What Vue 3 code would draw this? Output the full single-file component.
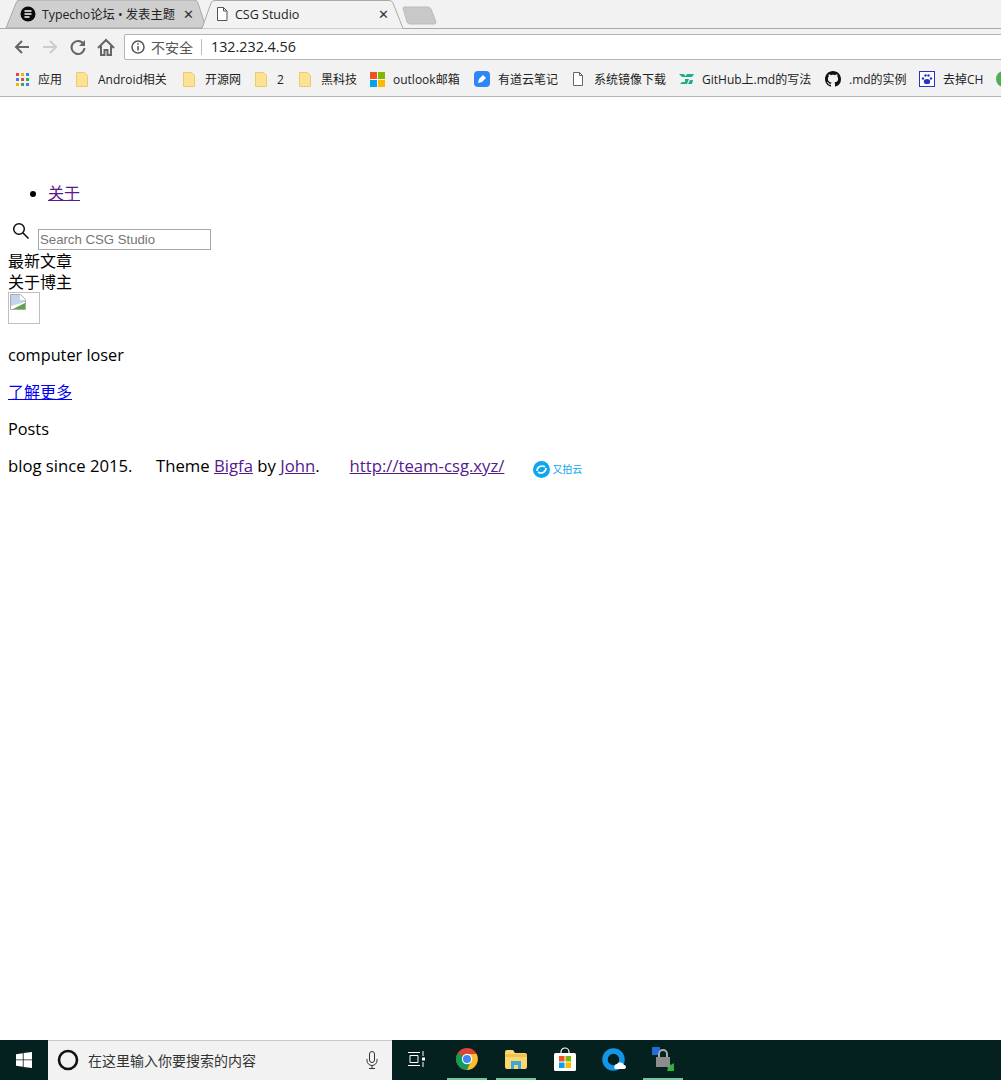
<script setup>
const bookmarks = [
  { icon: 'apps', label: '应用', w: 24 },
  { icon: 'folder', label: 'Android相关', w: 71 },
  { icon: 'folder', label: '开源网', w: 36 },
  { icon: 'folder', label: '2', w: 8 },
  { icon: 'folder', label: '黑科技', w: 36 },
  { icon: 'ms', label: 'outlook邮箱', w: 69 },
  { icon: 'youdao', label: '有道云笔记', w: 60 },
  { icon: 'doc', label: '系统镜像下载', w: 72 },
  { icon: 'tc', label: 'GitHub上.md的写法', w: 111 },
  { icon: 'github', label: '.md的实例', w: 58 },
  { icon: 'baidu', label: '去掉CH', w: 41 },
  { icon: 'globe', label: '', w: 0 }
]
const appColors = ['#e8453c', '#f4b400', '#3f7fe8', '#3f7fe8', '#e8453c', '#34a853', '#f4b400', '#34a853', '#3f7fe8']
</script>

<template>
  <div class="screen">
    <header class="tabstrip">
      <svg class="tabshapes" width="1001" height="29" viewBox="0 0 1001 29">
        <path d="M6 28 L16 3 Q17 0 20 0 H194 Q197 0 198 3 L206 28 Z" fill="#cfcfcf" stroke="#a9a9a9" />
        <path d="M202 28.5 L211 3 Q212 .5 215 .5 H389 Q392 .5 393 3 L403 28.5" fill="#f2f2f2" stroke="#a9a9a9" />
        <path d="M403 8 Q403 7 405 7 H428 Q430 7 431 9 L436 22 Q436 24 434 24 H410 Q408 24 407 22 Z" fill="#c8c8c8" stroke="#bbb" />
      </svg>
      <div class="tab tab-back">
        <svg width="16" height="16" viewBox="0 0 16 16">
          <circle cx="8" cy="8" r="7.5" fill="#0b0b0b" />
          <path d="M4.5 5h7M4.5 8h7M4.5 11h5" stroke="#fff" stroke-width="1.3" />
        </svg>
        <span class="tab-title">Typecho论坛 • 发表主题</span>
        <span class="tab-close">✕</span>
      </div>
      <div class="tab tab-active">
        <svg width="14" height="16" viewBox="0 0 14 16">
          <path d="M2.5 1.5h6l3.5 3.5v9.5h-9.5zM8.5 1.5v3.5h3.5" fill="#fff" stroke="#555" />
        </svg>
        <span class="tab-title">CSG Studio</span>
        <span class="tab-close">✕</span>
      </div>
    </header>

    <div class="toolbar">
      <svg class="navicon" width="18" height="18" viewBox="0 0 18 18">
        <path d="M16 9H3M9 3 3 9l6 6" fill="none" stroke="#666" stroke-width="2" />
      </svg>
      <svg class="navicon" width="18" height="18" viewBox="0 0 18 18">
        <path d="M2 9h13M9 3l6 6-6 6" fill="none" stroke="#ccc" stroke-width="2" />
      </svg>
      <svg class="navicon" width="18" height="18" viewBox="0 0 18 18">
        <path d="M14.5 6A6.5 6.5 0 1 0 15.5 10" fill="none" stroke="#666" stroke-width="2" />
        <path d="M16 2v6h-6z" fill="#666" />
      </svg>
      <svg class="navicon" width="18" height="18" viewBox="0 0 18 18">
        <path d="M1 10 9 2l8 8M4 8v9h3.5v-5h3v5H14V8" fill="none" stroke="#666" stroke-width="2" />
      </svg>
      <div class="omnibox">
        <svg width="14" height="14" viewBox="0 0 14 14">
          <circle cx="7" cy="7" r="6" fill="none" stroke="#555" stroke-width="1.5" />
          <path d="M7 6v4.5M7 3.2v1.6" stroke="#555" stroke-width="1.5" />
        </svg>
        <span class="insecure">不安全</span>
        <span class="divider"></span>
        <span class="url">132.232.4.56</span>
      </div>
    </div>

    <nav class="bookmarks">
      <div v-for="b in bookmarks" :key="b.icon + b.label" class="bookmark">
        <span class="bookmark-icon">
          <svg v-if="b.icon === 'apps'" width="13" height="13" viewBox="0 0 13 13">
            <rect
              v-for="(c, i) in appColors"
              :key="i"
              :x="(i % 3) * 5"
              :y="Math.floor(i / 3) * 5"
              width="3"
              height="3"
              :fill="c"
            />
          </svg>
          <svg v-else-if="b.icon === 'folder'" width="12" height="15" viewBox="0 0 12 15">
            <path d="M.5.5h8l3 3v11h-11z" fill="#fde293" stroke="#eccb6f" />
          </svg>
          <svg v-else-if="b.icon === 'ms'" width="15" height="15" viewBox="0 0 15 15">
            <rect width="7" height="7" fill="#f25022" />
            <rect x="8" width="7" height="7" fill="#7fba00" />
            <rect y="8" width="7" height="7" fill="#00a4ef" />
            <rect x="8" y="8" width="7" height="7" fill="#ffb900" />
          </svg>
          <svg v-else-if="b.icon === 'youdao'" width="16" height="16" viewBox="0 0 16 16">
            <rect width="16" height="16" rx="4" fill="#2f86f6" />
            <path d="M4 12l1-4 4-4 3 3-4 4z" fill="#fff" />
          </svg>
          <svg v-else-if="b.icon === 'doc'" width="10" height="14" viewBox="0 0 10 14">
            <path d="M.5.5h6l3 3v10h-9zM6.5.5v3h3" fill="#fff" stroke="#666" />
          </svg>
          <svg v-else-if="b.icon === 'tc'" width="15" height="12" viewBox="0 0 15 12">
            <path d="M0 1h5l2 3H3zM8 1h7l-2 3H6zM6 6h4L8 11H1l2-2h3zM11 7h3l-1 4h-4z" fill="#1fae8c" />
          </svg>
          <svg v-else-if="b.icon === 'github'" width="16" height="16" viewBox="0 0 16 16">
            <path fill="#111" d="M8 0C3.58 0 0 3.58 0 8c0 3.54 2.29 6.53 5.47 7.59.4.07.55-.17.55-.38 0-.19-.01-.82-.01-1.49-2.01.37-2.53-.49-2.69-.94-.09-.23-.48-.94-.82-1.13-.28-.15-.68-.52-.01-.53.63-.01 1.08.58 1.23.82.72 1.21 1.87.87 2.33.66.07-.52.28-.87.51-1.07-1.78-.2-3.64-.89-3.64-3.95 0-.87.31-1.59.82-2.15-.08-.2-.36-1.02.08-2.12 0 0 .67-.21 2.2.82.64-.18 1.32-.27 2-.27.68 0 1.36.09 2 .27 1.53-1.04 2.2-.82 2.2-.82.44 1.1.16 1.92.08 2.12.51.56.82 1.27.82 2.15 0 3.07-1.87 3.75-3.65 3.95.29.25.54.73.54 1.48 0 1.07-.01 1.93-.01 2.2 0 .21.15.46.55.38A8.013 8.013 0 0016 8c0-4.42-3.58-8-8-8z" />
          </svg>
          <svg v-else-if="b.icon === 'baidu'" width="16" height="16" viewBox="0 0 16 16">
            <rect x=".5" y=".5" width="15" height="15" fill="#fff" stroke="#2a32c8" />
            <ellipse cx="8" cy="10.5" rx="3.2" ry="2.6" fill="#2a32c8" />
            <circle cx="4" cy="7.5" r="1.2" fill="#2a32c8" />
            <circle cx="6.5" cy="4.5" r="1.2" fill="#2a32c8" />
            <circle cx="9.5" cy="4.5" r="1.2" fill="#2a32c8" />
            <circle cx="12" cy="7.5" r="1.2" fill="#2a32c8" />
          </svg>
          <svg v-else width="16" height="16" viewBox="0 0 16 16">
            <circle cx="8" cy="8" r="8" fill="#4caf50" />
          </svg>
        </span>
        <span v-if="b.label" class="bookmark-label" :style="{ width: b.w + 'px' }">{{ b.label }}</span>
      </div>
    </nav>

    <main class="page">
      <ul class="menu">
        <li><a class="visited" href="#">关于</a></li>
      </ul>
      <div class="search">
        <svg width="18" height="18" viewBox="0 0 18 18">
          <circle cx="7" cy="7" r="5.3" fill="none" stroke="#111" stroke-width="1.5" />
          <path d="M11 11l5.5 5.5" stroke="#111" stroke-width="1.6" />
        </svg>
        <input class="search-input" type="text" placeholder="Search CSG Studio" />
      </div>
      <div class="line">最新文章</div>
      <div class="line">关于博主</div>
      <div class="avatar">
        <svg width="16" height="16" viewBox="0 0 16 16">
          <path d="M.5.5h10l5 5v10H.5z" fill="#fff" stroke="#aaa" />
          <path d="M1 1h9v5h5v2L1 12z" fill="#c4d4ee" />
          <path d="M3 15l12-6v6z" fill="#5aa845" />
        </svg>
      </div>
      <p class="latin">computer loser</p>
      <p><a class="fresh" href="#">了解更多</a></p>
      <p class="latin posts">Posts</p>
      <p class="foot">
        <span>blog since 2015.</span>
        <span>Theme <a class="visited" href="#">Bigfa</a> by <a class="visited" href="#">John</a>.</span>
        <a class="visited" href="#">http://team-csg.xyz/</a>
        <span class="upyun">
          <svg width="17" height="17" viewBox="0 0 17 17">
            <circle cx="8.5" cy="8.5" r="8.5" fill="#10a6ee" />
            <path d="M4 10a5 5 0 0 1 8-4M13 7a5 5 0 0 1-8 4" fill="none" stroke="#fff" stroke-width="1.6" />
          </svg>
          <span class="upyun-text">又拍云</span>
        </span>
      </p>
    </main>

    <footer class="taskbar">
      <div class="start">
        <svg width="16" height="16" viewBox="0 0 16 16">
          <path d="M0 2.2 6.8 1.2V7.5H0zM7.6 1.1 16 0V7.5H7.6zM0 8.3H6.8V14.7L0 13.8zM7.6 8.3H16V16L7.6 14.9z" fill="#fff" />
        </svg>
      </div>
      <div class="taskbar-search">
        <svg width="22" height="22" viewBox="0 0 22 22">
          <circle cx="11" cy="11" r="9" fill="none" stroke="#111" stroke-width="2.6" />
        </svg>
        <span class="taskbar-hint">在这里输入你要搜索的内容</span>
        <svg class="mic" width="12" height="18" viewBox="0 0 12 18">
          <rect x="3.5" y=".5" width="5" height="11" rx="2.5" fill="none" stroke="#333" />
          <path d="M1 8v1.5a5 5 0 0 0 10 0V8M6 14.5V17M3 17.5h6" fill="none" stroke="#333" />
        </svg>
      </div>
      <div class="task-slot task-view">
        <svg width="18" height="16" viewBox="0 0 18 16">
          <path d="M0 1.5h12M0 14.5h12M2 4.5h8v7H2zM15 0v5M15 11v5" fill="none" stroke="#fff" />
          <rect x="14" y="6.5" width="3" height="3" fill="#fff" />
        </svg>
      </div>
      <div class="task-slot running">
        <svg width="22" height="22" viewBox="0 0 22 22">
          <circle cx="11" cy="11" r="11" fill="#db4437" />
          <path d="M1.5 5.5A11 11 0 0 0 11 22l5-11z" fill="#0f9d58" />
          <path d="M11 6h9.5A11 11 0 0 1 11 22l5-11z" fill="#fbc02d" />
          <circle cx="11" cy="11" r="5.2" fill="#fff" />
          <circle cx="11" cy="11" r="4" fill="#4285f4" />
        </svg>
      </div>
      <div class="task-slot running">
        <svg width="22" height="19" viewBox="0 0 22 19">
          <path d="M0 2q0-2 2-2h6l2 3h10q2 0 2 2v12q0 2-2 2H2q-2 0-2-2z" fill="#fbd76e" />
          <path d="M0 4h22v3H0z" fill="#f0c24f" />
          <path d="M6 19v-8h10v8h-3v-4H9v4z" fill="#39a9dc" />
        </svg>
      </div>
      <div class="task-slot">
        <svg width="24" height="24" viewBox="0 0 24 24">
          <path d="M8 7V5a4 4 0 0 1 8 0v2" fill="none" stroke="#fff" stroke-width="1.2" />
          <rect x="1" y="6" width="22" height="18" rx="1.5" fill="#fff" />
          <rect x="6" y="9" width="5.5" height="5.5" fill="#f25022" />
          <rect x="12.5" y="9" width="5.5" height="5.5" fill="#7fba00" />
          <rect x="6" y="15.5" width="5.5" height="5.5" fill="#00a4ef" />
          <rect x="12.5" y="15.5" width="5.5" height="5.5" fill="#ffb900" />
        </svg>
      </div>
      <div class="task-slot">
        <svg width="24" height="23" viewBox="0 0 24 23">
          <circle cx="11.5" cy="11.5" r="8.5" fill="none" stroke="#1296e8" stroke-width="5.5" />
          <path d="M13 21a3 3 0 0 1 2-5 4 4 0 0 1 7 1 2 2 0 0 1 0 4z" fill="#fff" />
        </svg>
      </div>
      <div class="task-slot running">
        <svg width="24" height="24" viewBox="0 0 24 24">
          <rect x="1" y="0" width="8" height="8" fill="#1d6fd8" />
          <path d="M16 24h7v-8l-3 2-4-4-3 3 4 4z" fill="#2fb33c" />
          <path d="M8 10V7a4 4 0 0 1 8 0v3" fill="none" stroke="#aaa" stroke-width="2" />
          <rect x="5" y="10" width="14" height="10" fill="#8a8d8c" />
        </svg>
      </div>
    </footer>
  </div>
</template>

<style>
html,
body {
  margin: 0;
  background: #fff;
}
</style>

<style scoped>
.screen {
  width: 1001px;
  height: 1080px;
  display: flex;
  flex-direction: column;
  overflow: hidden;
  font-family: "Open Sans", "Noto Sans CJK SC", sans-serif;
  color: #111;
}

.tabstrip {
  position: relative;
  height: 28px;
  flex: none;
  display: flex;
  background: #f2f2f2;
  border-bottom: 1px solid #a9a9a9;
  box-sizing: content-box;
}

.tabshapes {
  position: absolute;
  left: 0;
  top: 0;
}

.tab {
  position: relative;
  display: flex;
  align-items: center;
  height: 28px;
  font-size: 12.5px;
  color: #222;
}

.tab-back {
  width: 194px;
  padding-left: 20px;
  box-sizing: border-box;
  gap: 6px;
  font-size: 12.3px;
}

.tab-active {
  width: 174px;
  margin-left: 21px;
  gap: 6px;
}

.tab-close {
  margin-left: auto;
  font-size: 13px;
  font-weight: 700;
  color: #333;
  font-family: "DejaVu Sans", sans-serif;
}

.toolbar {
  height: 35px;
  flex: none;
  display: flex;
  align-items: center;
  background: #f2f2f2;
  padding-left: 13px;
  gap: 10px;
  box-sizing: border-box;
}

.navicon {
  flex: none;
}

.omnibox {
  flex: 1;
  height: 26px;
  margin-left: -1px;
  margin-right: -4px;
  display: flex;
  align-items: center;
  padding-left: 6px;
  background: #fff;
  border: 1px solid #b4b4b4;
  border-radius: 2px;
  box-sizing: border-box;
  font-size: 14px;
}

.insecure {
  margin-left: 6px;
  font-size: 14px;
  color: #555;
}

.divider {
  width: 1px;
  height: 16px;
  margin: 0 9px 0 8px;
  background: #bbb;
}

.url {
  font-size: 14.3px;
  color: #222;
}

.bookmarks {
  height: 33px;
  flex: none;
  display: flex;
  align-items: center;
  padding: 0 0 2px 14px;
  gap: 12px;
  background: #f2f2f2;
  border-bottom: 1px solid #b4b4b4;
  box-sizing: border-box;
  overflow: hidden;
  font-size: 12px;
  white-space: nowrap;
}

.bookmark {
  display: flex;
  align-items: center;
  gap: 8px;
  flex: none;
}

.bookmark-icon {
  width: 16px;
  height: 16px;
  display: flex;
  align-items: center;
  justify-content: center;
}

.bookmark-label {
  color: #222;
}

.page {
  flex: 1;
  padding: 86px 8px 0;
  font-size: 16px;
  line-height: 21px;
  color: #000;
}

.menu {
  margin: 0 0 16px;
  padding-left: 40px;
}

.search {
  display: flex;
  align-items: flex-start;
  height: 31px;
  padding-left: 4px;
  box-sizing: border-box;
}

.search svg {
  margin-top: 2px;
}

.search-input {
  width: 173px;
  height: 21px;
  margin: 9px 0 0 8px;
  padding: 1px;
  box-sizing: border-box;
  border: 1px solid #a9a9a9;
  font-family: "Liberation Sans", sans-serif;
  font-size: 13.2px;
}

.search-input::placeholder {
  color: #757575;
}

.avatar {
  width: 32px;
  height: 32px;
  margin-bottom: 21px;
  margin-top: -1px;
  padding: 1px;
  box-sizing: border-box;
  border: 1px solid #c0c0c0;
}

.avatar svg {
  display: block;
}

p {
  margin: 16px 0;
}

.latin {
  font-size: 16.3px;
}

.posts {
  margin-bottom: 15px;
}

.visited {
  color: #551a8b;
}

.fresh {
  color: #0000ee;
}

.foot {
  display: flex;
  align-items: flex-start;
  height: 21px;
  margin-top: 15px;
  white-space: nowrap;
  font-size: 16.7px;
}

.foot > span:nth-child(2) {
  margin-left: 23.5px;
}

.foot > a {
  margin-left: 30px;
}

.upyun {
  display: flex;
  align-items: center;
  gap: 2px;
  margin: 4px 0 0 29px;
}

.upyun-text {
  font-size: 10px;
  color: #10a6ee;
}

.taskbar {
  height: 40px;
  flex: none;
  display: flex;
  align-items: stretch;
  background: #04211f;
}

.start {
  width: 48px;
  display: flex;
  align-items: center;
  justify-content: center;
}

.taskbar-search {
  width: 344px;
  display: flex;
  align-items: center;
  padding: 0 14px 1px 9px;
  box-sizing: border-box;
  background: #f2f2f2;
  border-top: 1px solid #c8c8c8;
}

.taskbar-hint {
  margin-left: 9px;
  font-size: 14px;
  color: #333;
}

.mic {
  margin-left: auto;
}

.task-slot {
  width: 40px;
  margin: 0 4.5px;
  display: flex;
  align-items: center;
  justify-content: center;
  box-sizing: border-box;
  border-bottom: 2px solid transparent;
}

.task-view {
  margin-right: 6px;
}

.task-slot.running {
  border-bottom-color: #76c79a;
}
</style>
